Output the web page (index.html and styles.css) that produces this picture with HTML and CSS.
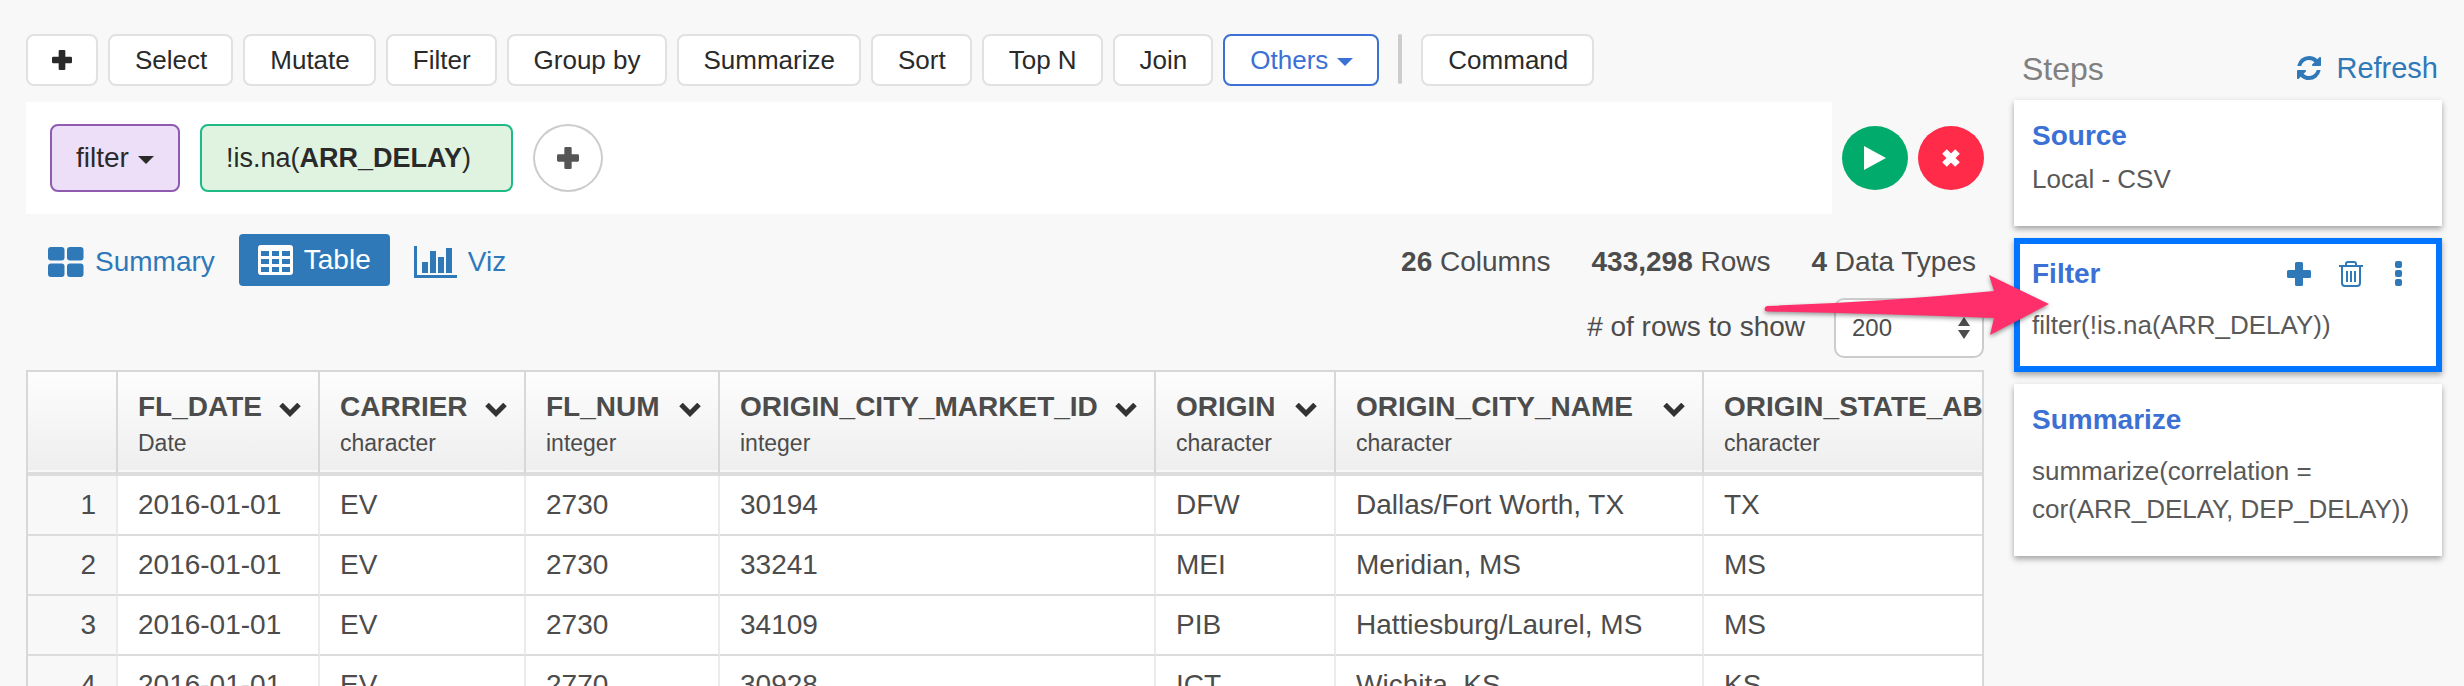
FILE: index.html
```html
<!DOCTYPE html>
<html lang="en">
<head>
<meta charset="utf-8">
<title>Flight data</title>
<link rel="stylesheet" href="styles.css">
</head>
<body>
<svg class="defs" aria-hidden="true">
  <symbol id="plus" viewBox="0 0 24 24"><path d="M9.500 0h5q1.500 0 1.500 1.500V8h6.500q1.500 0 1.500 1.500v5q0 1.500-1.500 1.500H16v6.500q0 1.500-1.500 1.500h-5q-1.500 0-1.500-1.500V16H1.500Q0 16 0 14.500v-5Q0 8 1.500 8H8V1.500Q8 0 9.500 0z"/></symbol>
  <symbol id="caret" viewBox="0 0 16 8"><path d="M0 0h16L8 8z"/></symbol>
  <symbol id="chevron" viewBox="0 0 22 14"><path d="M2 1.500L11 10.500l9-9" fill="none" stroke="currentColor" stroke-width="5"/></symbol>
</svg>
<div class="page">
  <main class="main">
    <div class="toolbar">
      <button class="tool tool-add" aria-label="Add"><svg class="icon-20"><use href="#plus"/></svg></button>
      <button class="tool">Select</button>
      <button class="tool">Mutate</button>
      <button class="tool">Filter</button>
      <button class="tool">Group by</button>
      <button class="tool">Summarize</button>
      <button class="tool">Sort</button>
      <button class="tool">Top N</button>
      <button class="tool">Join</button>
      <button class="tool tool-active">Others <svg class="caret"><use href="#caret"/></svg></button>
      <span class="separator"></span>
      <button class="tool">Command</button>
    </div>

    <div class="builder">
      <div class="expression">
        <button class="chip chip-verb">filter <svg class="caret"><use href="#caret"/></svg></button>
        <button class="chip chip-condition"><span>!is.na(<b>ARR_DELAY</b>)</span></button>
        <button class="round round-add" aria-label="Add condition"><svg class="icon-22"><use href="#plus"/></svg></button>
      </div>
      <button class="round round-run" aria-label="Run"><svg width="22" height="24" viewBox="0 0 22 24"><path d="M0 0l22 12L0 24z"/></svg></button>
      <button class="round round-cancel" aria-label="Cancel"><svg width="20" height="20" viewBox="0 0 20 20"><path d="M3.500 3.500l13 13M16.500 3.500l-13 13" stroke="currentColor" stroke-width="6.500"/></svg></button>
    </div>

    <div class="viewbar">
      <nav class="tabs">
        <a class="tab" href="#summary"><svg width="36" height="30" viewBox="0 0 36 30"><rect width="16.500" height="13.500" rx="3"/><rect x="19" width="16.500" height="13.500" rx="3"/><rect y="16.500" width="16.500" height="13.500" rx="3"/><rect x="19" y="16.500" width="16.500" height="13.500" rx="3"/></svg>Summary</a>
        <a class="tab tab-active" href="#table"><svg width="35" height="30" viewBox="0 0 35 30"><path fill-rule="evenodd" d="M3 0h29q3 0 3 3v24q0 3-3 3H3q-3 0-3-3V3q0-3 3-3zM3 6v5h8V6zM14 6v5h7V6zM24 6v5h8V6zM3 14v5h8v-5zM14 14v5h7v-5zM24 14v5h8v-5zM3 22v5h8v-5zM14 22v5h7v-5zM24 22v5h8v-5z"/></svg>Table</a>
        <a class="tab" href="#viz"><svg width="43" height="32" viewBox="0 0 43 32"><path d="M0 0h3v29h40v3H0zM8 16h6v11H8zM16 5h6v22h-6zM24 11h6v16h-6zM32 2h6v25h-6z"/></svg>Viz</a>
      </nav>
      <div class="stats">
        <span><b>26</b> Columns</span>
        <span><b>433,298</b> Rows</span>
        <span><b>4</b> Data Types</span>
      </div>
    </div>

    <div class="rowcount">
      <label for="rows"># of rows to show</label>
      <div class="select-wrap">
        <select id="rows"><option>200</option></select>
        <svg class="select-arrows" viewBox="0 0 12 22"><path d="M0 9L6 0l6 9zM0 13l6 9 6-9z"/></svg>
      </div>
    </div>

    <div class="grid-wrap">
      <table class="grid">
        <colgroup><col class="w-index"><col class="w-date"><col class="w-carrier"><col class="w-num"><col class="w-market"><col class="w-origin"><col class="w-city"><col></colgroup>
        <thead>
          <tr>
            <th></th>
            <th><div class="head">FL_DATE<button class="menu" aria-label="FL_DATE menu"><svg><use href="#chevron"/></svg></button></div><div class="type">Date</div></th>
            <th><div class="head">CARRIER<button class="menu" aria-label="CARRIER menu"><svg><use href="#chevron"/></svg></button></div><div class="type">character</div></th>
            <th><div class="head">FL_NUM<button class="menu" aria-label="FL_NUM menu"><svg><use href="#chevron"/></svg></button></div><div class="type">integer</div></th>
            <th><div class="head">ORIGIN_CITY_MARKET_ID<button class="menu" aria-label="ORIGIN_CITY_MARKET_ID menu"><svg><use href="#chevron"/></svg></button></div><div class="type">integer</div></th>
            <th><div class="head">ORIGIN<button class="menu" aria-label="ORIGIN menu"><svg><use href="#chevron"/></svg></button></div><div class="type">character</div></th>
            <th><div class="head">ORIGIN_CITY_NAME<button class="menu" aria-label="ORIGIN_CITY_NAME menu"><svg><use href="#chevron"/></svg></button></div><div class="type">character</div></th>
            <th><div class="head">ORIGIN_STATE_AB</div><div class="type">character</div></th>
          </tr>
        </thead>
        <tbody>
          <tr><td>1</td><td>2016-01-01</td><td>EV</td><td>2730</td><td>30194</td><td>DFW</td><td>Dallas/Fort Worth, TX</td><td>TX</td></tr>
          <tr><td>2</td><td>2016-01-01</td><td>EV</td><td>2730</td><td>33241</td><td>MEI</td><td>Meridian, MS</td><td>MS</td></tr>
          <tr><td>3</td><td>2016-01-01</td><td>EV</td><td>2730</td><td>34109</td><td>PIB</td><td>Hattiesburg/Laurel, MS</td><td>MS</td></tr>
          <tr><td>4</td><td>2016-01-01</td><td>EV</td><td>2770</td><td>30928</td><td>ICT</td><td>Wichita, KS</td><td>KS</td></tr>
        </tbody>
      </table>
    </div>
  </main>

  <aside class="steps">
    <header class="steps-head">
      <h2>Steps</h2>
      <button class="refresh"><svg width="24" height="24" viewBox="0 0 1536 1536"><path d="M1511 928q0 5-1 7-64 268-268 434.500T764 1536q-146 0-282.500-55T238 1324l-129 129q-19 19-45 19t-45-19-19-45V960q0-26 19-45t45-19h448q26 0 45 19t19 45-19 45l-137 137q71 66 161 102t187 36q134 0 250-65t186-179q11-17 53-117 8-23 30-23h192q13 0 22.500 9.500t9.500 22.500zm25-800v448q0 26-19 45t-45 19h-448q-26 0-45-19t-19-45 19-45l138-138Q969 256 768 256q-134 0-250 65T332 500q-11 17-53 117-8 23-30 23H50q-13 0-22.500-9.500T18 608v-7q65-268 270-434.500T768 0q146 0 284 55.500T1297 212l130-129q19-19 45-19t45 19 19 45z"/></svg>Refresh</button>
    </header>
    <section class="card card-source">
      <div class="card-head"><h3>Source</h3></div>
      <p>Local - CSV</p>
    </section>
    <section class="card card-selected">
      <div class="card-head">
        <h3>Filter</h3>
        <div class="actions">
          <button aria-label="Add step"><svg width="24" height="24"><use href="#plus"/></svg></button>
          <button aria-label="Delete step"><svg width="24" height="26" viewBox="0 0 24 26"><path d="M0 5h24M3 5v17q0 3 3 3h12q3 0 3-3V5M7 5V3q0-2 2-2h6q2 0 2 2v2M8 10v11M12 10v11M16 10v11" fill="none" stroke="currentColor" stroke-width="2"/></svg></button>
          <button aria-label="More"><svg width="8" height="26" viewBox="0 0 8 26"><rect width="7" height="7" rx="2"/><rect y="9" width="7" height="7" rx="2"/><rect y="18" width="7" height="7" rx="2"/></svg></button>
        </div>
      </div>
      <p>filter(!is.na(ARR_DELAY))</p>
      <svg class="pointer" viewBox="0 0 290 72"><path d="M4 34Q120 30 231 19L226 3l60 29-59 31 4-17Q120 42 4 39.500q-2.500-.5-2.500-2.500T4 34z"/></svg>
    </section>
    <section class="card">
      <div class="card-head"><h3>Summarize</h3></div>
      <p>summarize(correlation = cor(ARR_DELAY, DEP_DELAY))</p>
    </section>
  </aside>
</div>
</body>
</html>
```
FILE: styles.css
```css
* {
  box-sizing: border-box;
}

body {
  margin: 0;
  height: 100vh;
  overflow: hidden;
  background: #f8f8f8;
  color: #4c4c4c;
  font: 28px/32px "Liberation Sans", Arial, sans-serif;
}

button {
  margin: 0;
  padding: 0;
  border: 0;
  background: none;
  color: inherit;
  font: inherit;
}

svg {
  display: block;
  flex: none;
  fill: currentColor;
}

.defs {
  position: absolute;
  width: 0;
  height: 0;
}

.icon-20 { width: 20px; height: 20px; }
.icon-22 { width: 22px; height: 22px; }
.caret { width: 16px; height: 8px; margin-top: 4px; }

.page {
  display: flex;
  gap: 30px;
  padding: 34px 22px 0 26px;
}

.main {
  flex: 1;
  min-width: 0;
}

/* Toolbar */
.toolbar {
  display: flex;
  gap: 10px;
}

.tool {
  display: flex;
  align-items: center;
  gap: 9px;
  height: 52px;
  padding: 0 24px 0 25px;
  border: 2px solid #e1e1e1;
  border-radius: 8px;
  background: #fff;
  color: #2a2a2a;
  font-size: 26px;
  white-space: nowrap;
}

.tool-add {
  padding: 0 24px;
}

.tool-active {
  border-color: #3b70d4;
  color: #3b70d4;
}

.separator {
  width: 4px;
  height: 50px;
  margin: 0 9px;
  border-radius: 2px;
  background: #ccc;
}

/* Expression builder */
.builder {
  display: flex;
  align-items: center;
  gap: 10px;
  margin-top: 16px;
}

.expression {
  flex: 1;
  display: flex;
  align-items: center;
  gap: 20px;
  padding: 22px 24px;
  background: #fff;
}

.chip {
  display: flex;
  align-items: center;
  gap: 9px;
  height: 68px;
  padding: 0 24px;
  border: 2px solid;
  border-radius: 8px;
  color: #2a2a2a;
  white-space: nowrap;
}

.chip-verb {
  border-color: #8e5bb0;
  background: #ecdff7;
}

.chip-condition {
  padding-right: 40px;
  border-color: #1dba85;
  background: #dff3e0;
  font-size: 27px;
}

.round {
  display: flex;
  align-items: center;
  justify-content: center;
  width: 66px;
  height: 64px;
  border-radius: 50%;
  color: #fff;
}

.round-add {
  width: 70px;
  height: 68px;
  border: 2px solid #ccc;
  color: #555;
}

.round-run { background: #00ab6b; }
.round-cancel { background: #ff2b49; }

/* View switch and dataset figures */
.viewbar {
  display: flex;
  align-items: center;
  justify-content: space-between;
  margin-top: 20px;
  padding-right: 8px;
}

.tabs,
.tab {
  display: flex;
  align-items: center;
}

.tabs {
  gap: 24px;
  padding-left: 22px;
}

.tab {
  gap: 11px;
  color: #2f79b9;
  text-decoration: none;
}

.tab-active {
  height: 52px;
  margin-bottom: 4px;
  padding: 0 19px;
  border-radius: 4px;
  background: #2f79b9;
  color: #fff;
}

.stats {
  display: flex;
  gap: 41px;
}

.rowcount {
  display: flex;
  align-items: baseline;
  justify-content: flex-end;
  gap: 29px;
  margin-top: 8px;
}

.select-wrap {
  position: relative;
}

select {
  display: block;
  appearance: none;
  width: 150px;
  height: 60px;
  padding: 0 16px;
  border: 2px solid #ccc;
  border-radius: 10px;
  background: #fff;
  color: #4c4c4c;
  font: 24px/32px "Liberation Sans", Arial, sans-serif;
}

.select-arrows {
  position: absolute;
  top: 19px;
  right: 14px;
  width: 12px;
  height: 22px;
  pointer-events: none;
}

/* Data grid */
.grid-wrap {
  margin-top: 12px;
  overflow: hidden;
  border: 2px solid #d8d8d8;
  border-bottom: 0;
  background: #fff;
}

.grid {
  width: 100%;
  table-layout: fixed;
  border-collapse: separate;
  border-spacing: 0;
}

.w-index { width: 90px; }
.w-date { width: 202px; }
.w-carrier { width: 206px; }
.w-num { width: 194px; }
.w-market { width: 436px; }
.w-origin { width: 180px; }
.w-city { width: 368px; }

.grid th {
  padding: 18px 17px 15px 20px;
  border-right: 2px solid #d8d8d8;
  border-bottom: 4px solid #ddd;
  background: linear-gradient(#fdfdfd, #eee);
  box-shadow: inset 0 -2px #f8f8f8;
  text-align: left;
  white-space: nowrap;
}

.head {
  display: flex;
  align-items: center;
  justify-content: space-between;
  line-height: 34px;
}

.menu svg {
  width: 22px;
  height: 14px;
  margin-top: 6px;
  color: #333;
}

.type {
  margin-top: 5px;
  font-size: 23px;
  font-weight: 400;
  line-height: 28px;
}

.grid td {
  height: 60px;
  padding: 0 20px;
  border-right: 2px solid #ebebeb;
  border-bottom: 2px solid #dcdcdc;
  white-space: nowrap;
}

.grid td:first-child {
  background: #f8f8f8;
  text-align: right;
}

.grid th:last-child,
.grid td:last-child {
  border-right: 0;
}

/* Steps panel */
.steps {
  flex: none;
  width: 428px;
}

.steps-head {
  display: flex;
  align-items: center;
  justify-content: space-between;
  height: 66px;
  padding: 2px 4px 0 8px;
}

.steps-head h2 {
  margin: 2px 0 0;
  color: #808080;
  font-size: 32px;
  font-weight: 400;
}

.refresh {
  display: flex;
  align-items: center;
  gap: 15px;
  color: #2f79b9;
  font-size: 29px;
}

.card {
  position: relative;
  margin-bottom: 12px;
  padding: 16px 18px 28px;
  background: #fff;
  box-shadow: 0 3px 6px rgba(0, 0, 0, 0.35);
}

.card-head {
  display: flex;
  align-items: center;
  justify-content: space-between;
  margin-bottom: 12px;
}

.card-source .card-head {
  margin-bottom: 4px;
}

.card-selected {
  padding: 10px 12px 22px;
  border: 6px solid #0075ff;
}

.card h3 {
  margin: 0;
  color: #3b70d4;
  font-size: 28px;
  line-height: 40px;
}

.card p {
  margin: 0;
  color: #595959;
  font-size: 26px;
  line-height: 38px;
}

.actions {
  display: flex;
  align-items: center;
  gap: 28px;
  padding-right: 21px;
  color: #2f79b9;
}

.actions button:last-child {
  margin-left: 4px;
}

/* Callout arrow laid over the panel edge */
.pointer {
  position: absolute;
  top: 28px;
  left: -257px;
  width: 290px;
  height: 72px;
  overflow: visible;
  color: #ff2f6c;
  filter: drop-shadow(0 2px 2px rgba(0, 0, 0, 0.4));
}
```
